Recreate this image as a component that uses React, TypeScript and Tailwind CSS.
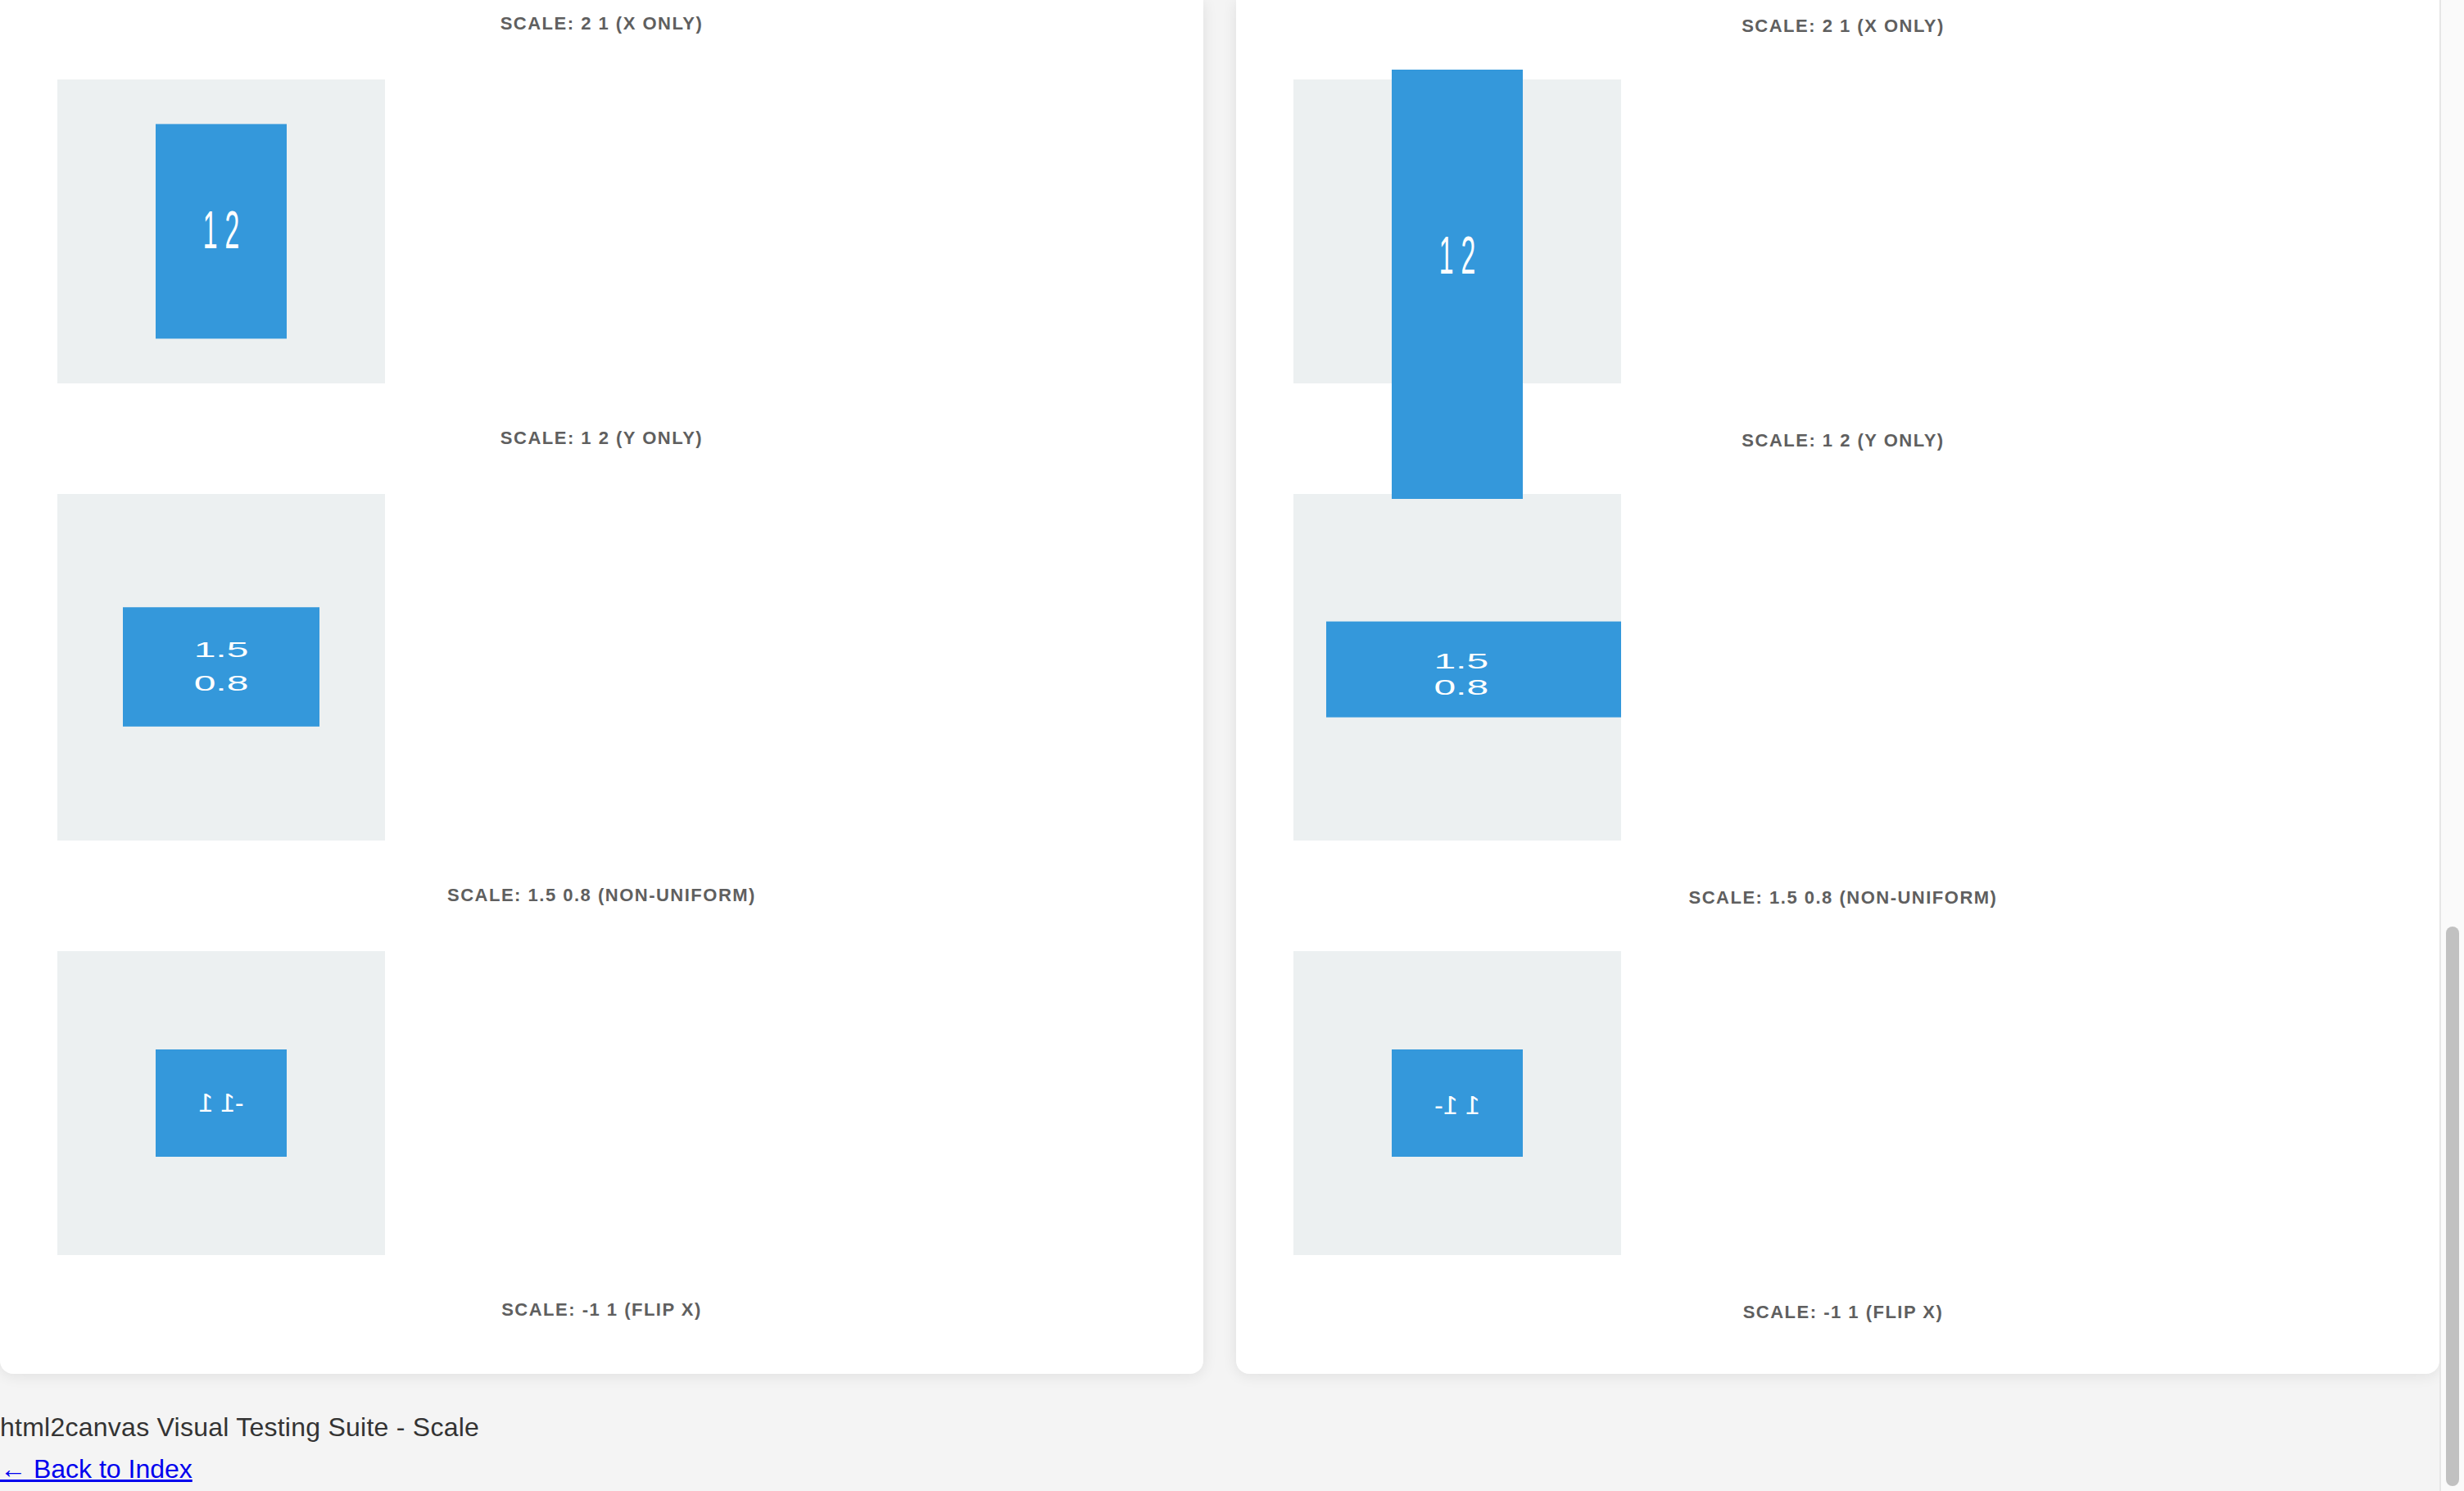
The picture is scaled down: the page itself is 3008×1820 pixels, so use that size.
import React from "react";

const labelCls =
  "h-[36px] leading-[36px] text-center text-[22px] font-bold tracking-[1.5px] text-[#5f5f5f] whitespace-nowrap";
const rLabelCls =
  "h-[36px] leading-[36px] pl-[13px] text-center text-[22px] font-bold tracking-[1.5px] text-[#5f5f5f] whitespace-nowrap";
const grayCls = "w-[400px] p-[120px] bg-[#ecf0f1] flex flex-col items-center";
const blueCls =
  "w-[160px] p-[40px] bg-[#3498db] text-white text-[32px] leading-[51.2px] text-center";

function LeftCard() {
  return (
    <div className="bg-white rounded-b-[16px] shadow-[0_2px_18px_rgba(0,0,0,0.09)] flex flex-col pt-[11px] pb-[60px]">
      <div className={labelCls}>SCALE: 2 1 (X ONLY)</div>

      <div className={`${grayCls} ml-[70px] mt-[50px]`}>
        <div className={`${blueCls} [transform:scale(1,2)]`}>1 2</div>
      </div>
      <div className={`${labelCls} mt-[49px]`}>SCALE: 1 2 (Y ONLY)</div>

      <div className={`${grayCls} ml-[70px] mt-[50px]`}>
        <div className={`${blueCls} [transform:scale(1.5,0.8)]`}>1.5 0.8</div>
      </div>
      <div className={`${labelCls} mt-[49px]`}>SCALE: 1.5 0.8 (NON-UNIFORM)</div>

      <div className={`${grayCls} ml-[70px] mt-[50px]`}>
        <div className={`${blueCls} [transform:scale(-1,1)]`}>-1 1</div>
      </div>
      <div className={`${labelCls} mt-[49px]`}>SCALE: -1 1 (FLIP X)</div>
    </div>
  );
}

function RightCard() {
  return (
    <div className="bg-white rounded-b-[16px] shadow-[0_2px_18px_rgba(0,0,0,0.09)] flex flex-col pt-[14px]">
      <div className={rLabelCls}>SCALE: 2 1 (X ONLY)</div>

      <div className={`${grayCls} ml-[70px] mt-[47px]`}>
        <div className="relative z-10 shrink-0 w-[160px] h-[524px] mt-[-132px] mb-[-260.8px] pt-[203.4px] bg-[#3498db] text-white text-[32px] leading-[51.2px] text-center">
          <div className="[transform:scale(1,2)]">1 2</div>
        </div>
      </div>
      <div className={`${rLabelCls} mt-[52px]`}>SCALE: 1 2 (Y ONLY)</div>

      <div className={`${grayCls} ml-[70px] mt-[47px]`}>
        <div className="relative z-10 shrink-0 w-[360px] h-[116.8px] my-[32.8px] bg-[#3498db] text-white text-[32px] flex flex-col items-center justify-center [transform:translate(20px,2.6px)]">
          <div className="flex flex-col items-center [transform:translate(-15.5px,6.5px)]">
            <div className="leading-[32.8px]">
              <span className="inline-block [transform:scale(1.5,0.8)]">1.5</span>
            </div>
            <div className="leading-[32.8px]">
              <span className="inline-block [transform:scale(1.5,0.8)]">0.8</span>
            </div>
          </div>
        </div>
      </div>
      <div className={`${rLabelCls} mt-[52px]`}>SCALE: 1.5 0.8 (NON-UNIFORM)</div>

      <div className={`${grayCls} ml-[70px] mt-[47px]`}>
        <div className={blueCls}>
          <div className="[transform:translateY(2.5px)] whitespace-nowrap">
            <span className="inline-block [transform:scale(-1,1)]">-</span>
            <span className="inline-block [transform:scale(-1,1)]">1</span>{" "}
            <span className="inline-block [transform:scale(-1,1)]">1</span>
          </div>
        </div>
      </div>
      <div className={`${rLabelCls} mt-[52px]`}>SCALE: -1 1 (FLIP X)</div>
    </div>
  );
}

export default function App() {
  return (
    <div className="flex h-[1820px] w-[3008px] overflow-hidden bg-[#f4f4f4] font-['Liberation_Sans',Arial,sans-serif]">
      <div className="w-[2978px] flex flex-col">
        <div className="grid grid-cols-2 gap-[40px]">
          <LeftCard />
          <RightCard />
        </div>
        <div className="mt-[40px] text-[32px] leading-[51.2px] text-[#333]">
          <div className="tracking-[0.25px]">html2canvas Visual Testing Suite - Scale</div>
          <div>
            <a href="#" className="text-[#0000ee] underline">
              ← Back to Index
            </a>
          </div>
        </div>
      </div>
      <div className="w-[30px] flex flex-col border-l-2 border-[#e6e6e6] bg-[#fafafa] pt-[1131px] px-[6px] pb-[6px]">
        <div className="flex-1 rounded-full bg-[#c1c1c1]" />
      </div>
    </div>
  );
}
